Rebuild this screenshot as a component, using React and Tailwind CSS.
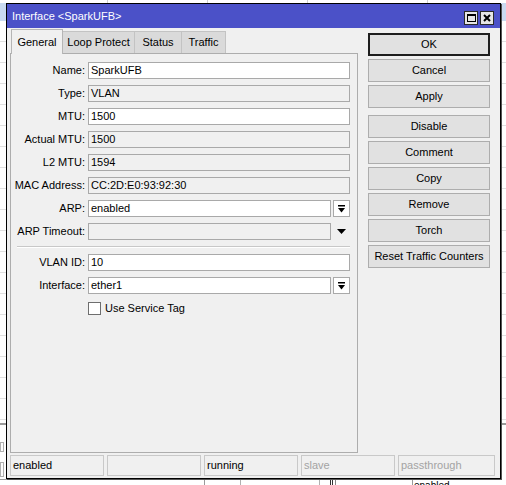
import React from "react";

function Field({ label, children }) {
  return (
    <div className="flex items-center h-[17px]">
      <div className="w-[74px] text-right leading-[17px] whitespace-nowrap">{label}</div>
      <div className="ml-[3px] flex-1 flex h-[17px]">{children}</div>
    </div>
  );
}

function Box({ value, editable }) {
  return (
    <div
      className={
        "flex-1 h-[17px] border border-[#a9a9a9] px-[2px] leading-[15px] whitespace-nowrap " +
        (editable ? "bg-white" : "bg-[#f0f0f0]")
      }
    >
      {value}
    </div>
  );
}

function DropBtn() {
  return (
    <div className="ml-[2px] w-[17px] h-[17px] border border-[#a9a9a9] bg-white flex items-center justify-center">
      <svg width="7" height="8" viewBox="0 0 7 8">
        <rect x="0" y="0" width="7" height="1.5" fill="#000" />
        <polygon points="0,3 7,3 3.5,7.5" fill="#000" />
      </svg>
    </div>
  );
}

function Btn({ children, def }) {
  return (
    <div
      className={
        "w-[122px] h-[23px] bg-[#e1e1e1] flex items-center justify-center whitespace-nowrap " +
        (def ? "border-2 border-[#1e1e1e]" : "border border-[#adadad]")
      }
    >
      {children}
    </div>
  );
}

function Cell({ children, muted, grow }) {
  return (
    <div
      className={
        (grow ? "flex-1 " : "w-[94px] ") +
        "h-[21px] border border-[#c9c9c9] pl-[2px] leading-[19px] " +
        (muted ? "text-[#a3a3a3]" : "text-black")
      }
    >
      {children}
    </div>
  );
}

export default function App() {
  return (
    <div className="relative w-[506px] h-[485px] bg-white overflow-hidden font-['Liberation_Sans',Arial,sans-serif] text-[11px] text-black">
      {/* background window content */}
      <div className="flex flex-col h-full">
        <div className="h-[4px] flex">
          <div className="w-[108px] border-r border-[#d0d0d0]" />
          <div className="w-[100px] border-r border-[#d0d0d0]" />
          <div className="w-[100px] border-r border-[#d0d0d0]" />
          <div className="w-[120px] border-r border-[#d0d0d0]" />
        </div>
        <div className="h-[23px] bg-[#c9daf0]" />
        <div className="flex-1 flex flex-col">
          <div className="h-[21px] border-b border-[#e0e0e0]" />
          <div className="h-[21px] border-b border-[#e0e0e0]" />
          <div className="h-[21px] border-b border-[#e0e0e0]" />
          <div className="h-[21px] border-b border-[#e0e0e0]" />
          <div className="h-[21px] border-b border-[#e0e0e0]" />
          <div className="h-[21px] border-b border-[#e0e0e0]" />
          <div className="h-[21px] border-b border-[#e0e0e0]" />
          <div className="h-[21px] border-b border-[#e0e0e0]" />
          <div className="h-[21px] border-b border-[#e0e0e0]" />
          <div className="h-[21px] border-b border-[#e0e0e0]" />
          <div className="h-[21px] border-b border-[#e0e0e0]" />
          <div className="h-[21px] border-b border-[#e0e0e0]" />
          <div className="h-[21px] border-b border-[#e0e0e0]" />
          <div className="h-[21px] border-b border-[#e0e0e0]" />
          <div className="h-[21px] border-b border-[#e0e0e0]" />
          <div className="h-[21px] border-b border-[#e0e0e0]" />
          <div className="h-[21px] border-b border-[#e0e0e0]" />
          <div className="h-[21px] border-b border-[#e0e0e0]" />
          <div className="h-[21px] border-b border-[#e0e0e0]" />
          <div className="h-[5px] border-b-2 border-[#9a9a9a]" />
        </div>
        <div className="h-[60px] flex flex-col pt-[17px]">
          <div className="h-[10px] w-[4px] border border-[#b0b0b0]" />
          <div className="mt-[10px] h-[15px] w-[4px] border border-[#b0b0b0]" />
          <div className="mt-[2px] h-[6px] flex items-start">
            <div className="w-[205px] h-[6px] border-t border-r border-[#9a9a9a]" />
            <div className="ml-[35px] w-[80px] h-[6px] border-t border-l border-r border-[#b0b0b0]" />
            <div className="ml-[10px] w-[3px] h-[6px] border-l border-r border-[#333]" />
            <div className="ml-[2px] w-[73px] h-[6px] border-t border-l border-[#888] bg-white" />
            <div className="ml-[4px] w-[58px] h-[6px] border-t border-l border-[#9a9a9a] text-[10px] leading-[12px] pl-[1px]">
              enabled
            </div>
          </div>
        </div>
      </div>

      {/* dialog window */}
      <div className="absolute left-[6px] top-[3px] w-[495px] h-[476px] border border-black bg-[#f0f0f0] flex flex-col shadow-[1px_1px_0_#555]">
        {/* title bar */}
        <div className="h-[24px] bg-[#4b51c8] flex items-center pl-[5px] pr-[6px]">
          <div className="flex-1 text-white text-[11px] leading-[24px]">Interface &lt;SparkUFB&gt;</div>
          <div className="self-end mb-[3px] flex gap-[2px]">
            <div className="w-[14px] h-[14px] bg-[#e6e6e6] border border-[#2a2a2a] flex items-center justify-center">
              <div className="w-[9px] h-[8px] border border-black border-t-2" />
            </div>
            <div className="w-[14px] h-[14px] bg-[#e6e6e6] border border-[#2a2a2a] flex items-center justify-center">
              <svg width="8" height="8" viewBox="0 0 8 8">
                <path d="M1 1 L7 7 M7 1 L1 7" stroke="#000" strokeWidth="2" />
              </svg>
            </div>
          </div>
        </div>

        {/* body */}
        <div className="flex-1 flex pl-[3px] pr-[10px]">
          {/* left column */}
          <div className="w-[348px] flex flex-col">
            <div className="h-[25px] flex items-end pl-[1px]">
              <div className="relative z-10 -mb-px w-[52px] h-[25px] bg-[#f0f0f0] border border-b-0 border-[#b5b5b5] flex items-center justify-center pt-[1px]">
                General
              </div>
              <div className="w-[72px] h-[22px] bg-[#dadada] border-t border-r border-[#c3c3c3] flex items-center justify-center">
                Loop Protect
              </div>
              <div className="w-[47px] h-[22px] bg-[#dadada] border-t border-r border-[#c3c3c3] flex items-center justify-center">
                Status
              </div>
              <div className="w-[44px] h-[22px] bg-[#dadada] border-t border-r border-[#c3c3c3] flex items-center justify-center">
                Traffic
              </div>
            </div>
            <div className="flex-1 border border-[#adadad] pt-[8px] pr-[7px] flex flex-col">
              <div className="flex flex-col gap-[6px]">
                <Field label="Name:">
                  <Box value="SparkUFB" editable />
                </Field>
                <Field label="Type:">
                  <Box value="VLAN" />
                </Field>
                <Field label="MTU:">
                  <Box value="1500" editable />
                </Field>
                <Field label="Actual MTU:">
                  <Box value="1500" />
                </Field>
                <Field label="L2 MTU:">
                  <Box value="1594" />
                </Field>
                <Field label="MAC Address:">
                  <Box value="CC:2D:E0:93:92:30" />
                </Field>
                <Field label="ARP:">
                  <Box value="enabled" editable />
                  <DropBtn />
                </Field>
                <Field label="ARP Timeout:">
                  <Box value="" />
                  <div className="ml-[2px] w-[17px] h-[17px] flex items-center justify-center">
                    <svg width="9" height="5" viewBox="0 0 9 5">
                      <polygon points="0,0 9,0 4.5,5" fill="#000" />
                    </svg>
                  </div>
                </Field>
              </div>
              <div className="mt-[6px] mb-[6px] ml-[6px] h-[2px] border-t border-[#c8c8c8] border-b border-b-white" />
              <div className="flex flex-col gap-[6px]">
                <Field label="VLAN ID:">
                  <Box value="10" editable />
                </Field>
                <Field label="Interface:">
                  <Box value="ether1" editable />
                  <DropBtn />
                </Field>
              </div>
              <div className="mt-[8px] ml-[77px] flex items-center h-[13px]">
                <div className="w-[13px] h-[13px] border border-[#6e6e6e] bg-white" />
                <div className="ml-[4px] leading-[13px]">Use Service Tag</div>
              </div>
            </div>
          </div>

          {/* right buttons */}
          <div className="ml-[10px] w-[122px] pt-[5px] flex flex-col gap-[3px]">
            <Btn def>OK</Btn>
            <Btn>Cancel</Btn>
            <Btn>Apply</Btn>
            <div className="mt-[4px] flex flex-col gap-[3px]">
              <Btn>Disable</Btn>
              <Btn>Comment</Btn>
              <Btn>Copy</Btn>
              <Btn>Remove</Btn>
              <Btn>Torch</Btn>
              <Btn>Reset Traffic Counters</Btn>
            </div>
          </div>
        </div>

        {/* status bar */}
        <div className="mt-[2px] mb-[2px] h-[21px] pl-[3px] pr-[5px] flex gap-[3px]">
          <Cell>enabled</Cell>
          <Cell></Cell>
          <Cell>running</Cell>
          <Cell muted>slave</Cell>
          <Cell muted grow>passthrough</Cell>
        </div>
      </div>
    </div>
  );
}
